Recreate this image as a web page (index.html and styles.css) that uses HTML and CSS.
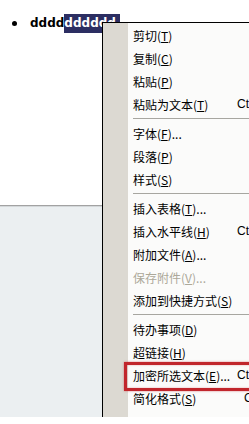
FILE: index.html
```html
<!DOCTYPE html>
<html>
<head>
<meta charset="utf-8">
<link rel="stylesheet" href="styles.css">
</head>
<body>
<div class="screen">
  <div class="doc">
    <div class="line"><span class="bullet"></span><span class="txt">dddd<span class="sel">dddddd</span></span></div>
  </div>
  <div class="pane"></div>
  <div class="foot"></div>

  <div class="menu">
    <div class="item"><span class="label">剪切(<u>T</u>)</span></div>
    <div class="item"><span class="label">复制(<u>C</u>)</span></div>
    <div class="item"><span class="label">粘贴(<u>P</u>)</span></div>
    <div class="item"><span class="label">粘贴为文本(<u>T</u>)</span><span class="key">Ctrl+Shift+V</span></div>
    <div class="sep"></div>
    <div class="item"><span class="label">字体(<u>F</u>)...</span></div>
    <div class="item"><span class="label">段落(<u>P</u>)</span></div>
    <div class="item"><span class="label">样式(<u>S</u>)</span></div>
    <div class="sep"></div>
    <div class="item"><span class="label">插入表格(<u>T</u>)...</span></div>
    <div class="item"><span class="label">插入水平线(<u>H</u>)</span><span class="key">Ctrl+H</span></div>
    <div class="item"><span class="label">附加文件(<u>A</u>)...</span></div>
    <div class="item disabled"><span class="label">保存附件(<u>V</u>)...</span></div>
    <div class="item"><span class="label wide">添加到快捷方式(<u>S</u>)</span></div>
    <div class="sep"></div>
    <div class="item"><span class="label">待办事项(<u>D</u>)</span></div>
    <div class="item"><span class="label">超链接(<u>H</u>)</span></div>
    <div class="item"><span class="label">加密所选文本(<u>E</u>)...</span><span class="key">Ctrl+E</span></div>
    <div class="item"><span class="label">简化格式(<u>S</u>)</span><span class="key late">Ctrl+0</span></div>
  </div>

  <div class="mark"></div>
</div>
</body>
</html>
```

FILE: styles.css
```css
html, body {
  margin: 0;
  padding: 0;
  background: #ffffff;
}

.screen {
  position: relative;
  width: 249px;
  height: 424px;
  overflow: hidden;
  display: flex;
  flex-direction: column;
}

.doc {
  height: 205px;
  flex: none;
  background: #ffffff;
  border-bottom: 1px solid #a2a2a2;
  box-shadow: 0 1px 0 #d4d8da;
}

.line {
  display: flex;
  align-items: center;
  height: 19px;
  margin-top: 14px;
}

.bullet {
  width: 5px;
  height: 5px;
  border-radius: 50%;
  background: #000;
  margin-left: 12px;
  margin-right: 13px;
  flex: none;
}

.txt {
  font-family: "DejaVu Sans", sans-serif;
  font-weight: bold;
  font-size: 12px;
  line-height: 19px;
  color: #000;
  white-space: nowrap;
}

.sel {
  background: #2c2e62;
  color: #ffffff;
  padding: 0 4px 0 0;
  display: inline-block;
  line-height: 19px;
}

.pane {
  flex: 1;
  background: #ebeff1;
  margin-top: 1px;
}

.foot {
  height: 7px;
  flex: none;
  background: #ffffff;
}

.menu {
  position: absolute;
  left: 102px;
  top: 22px;
  width: 170px;
  height: 395px;
  box-sizing: border-box;
  border: 1px solid #000;
  border-bottom: none;
  padding-top: 1px;
  background: linear-gradient(to right, #dcd9d2 25px, #fbfbfa 25px);
  font-family: "Noto Sans CJK SC", "Liberation Sans", sans-serif;
  font-size: 12px;
  color: #000;
  display: flex;
  flex-direction: column;
}

.item {
  height: 23px;
  flex: none;
  display: flex;
  align-items: center;
  padding-left: 30px;
  white-space: nowrap;
  line-height: 23px;
}

.label {
  width: 104px;
  flex: none;
}

.label u {
  text-underline-offset: 1px;
}

.key {
  font-family: "Liberation Sans", sans-serif;
  font-size: 12px;
}

.key.late {
  padding-left: 7px;
}

.disabled {
  color: #aca899;
}

.sep {
  height: 6px;
  flex: none;
  margin-left: 30px;
  padding-top: 2px;
  box-sizing: border-box;
}

.sep::after {
  content: "";
  display: block;
  height: 1px;
  background: #a7a6a0;
}

.mark {
  position: absolute;
  left: 124px;
  top: 362px;
  width: 140px;
  height: 29px;
  box-sizing: border-box;
  border: 3px solid #c1262c;
  box-shadow: 0 0 2px rgba(193, 38, 44, 0.55), inset 0 0 2px rgba(193, 38, 44, 0.4);
}
```
